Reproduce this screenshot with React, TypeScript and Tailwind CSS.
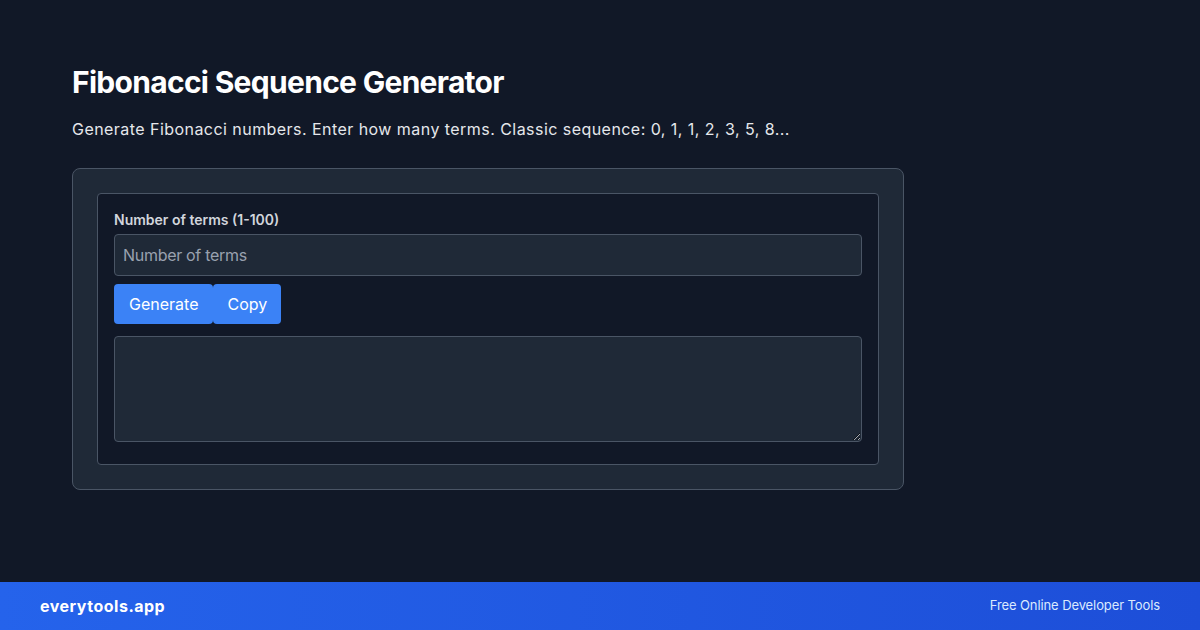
export default function App() {
  return (
    <div
      className="flex h-[630px] w-[1200px] flex-col bg-[#111827]"
      style={{ fontFamily: "Inter, 'Noto Sans', sans-serif" }}
    >
      <main className="flex-1 px-[72px] pt-16">
        <h1 className="text-[30px] font-bold leading-9 tracking-[-0.7px] text-white">
          Fibonacci Sequence Generator
        </h1>
        <p className="mt-[17px] text-base leading-6 tracking-[0.45px] text-gray-200">
          Generate Fibonacci numbers. Enter how many terms. Classic sequence: 0, 1, 1, 2, 3, 5, 8...
        </p>

        <div className="mt-[27px] w-[832px] rounded-lg border border-gray-600 bg-[#1f2937] p-6">
          <div className="rounded border border-gray-600 bg-[#111827] px-4 pb-[22px] pt-4">
            <label className="mb-1 block text-sm font-semibold leading-5 text-gray-300">
              Number of terms (1-100)
            </label>
            <input
              type="number"
              placeholder="Number of terms"
              className="block w-full rounded border border-gray-600 bg-[#1f2937] px-2 py-2 text-base leading-6 tracking-[-0.3px] text-white placeholder:text-gray-400 focus:outline-none"
            />
            <div className="mt-2 flex">
              <button
                type="button"
                className="rounded bg-[#3b82f6] px-[15px] py-2 text-base leading-6 text-white"
              >
                Generate
              </button>
              <button
                type="button"
                className="rounded bg-[#3b82f6] px-[14px] py-2 text-base leading-6 text-white"
              >
                Copy
              </button>
            </div>
            <textarea
              readOnly
              className="mt-3 block h-[106px] w-full rounded border border-gray-600 bg-[#1f2937] p-2 text-base text-white focus:outline-none"
            />
          </div>
        </div>
      </main>

      <footer className="flex h-12 items-center justify-between bg-gradient-to-r from-[#2563eb] to-[#1d4ed8] px-10">
        <span className="text-base font-bold tracking-[0.5px] text-white">everytools.app</span>
        <span className="text-[13px] tracking-[-0.1px] text-blue-100">Free Online Developer Tools</span>
      </footer>
    </div>
  );
}
